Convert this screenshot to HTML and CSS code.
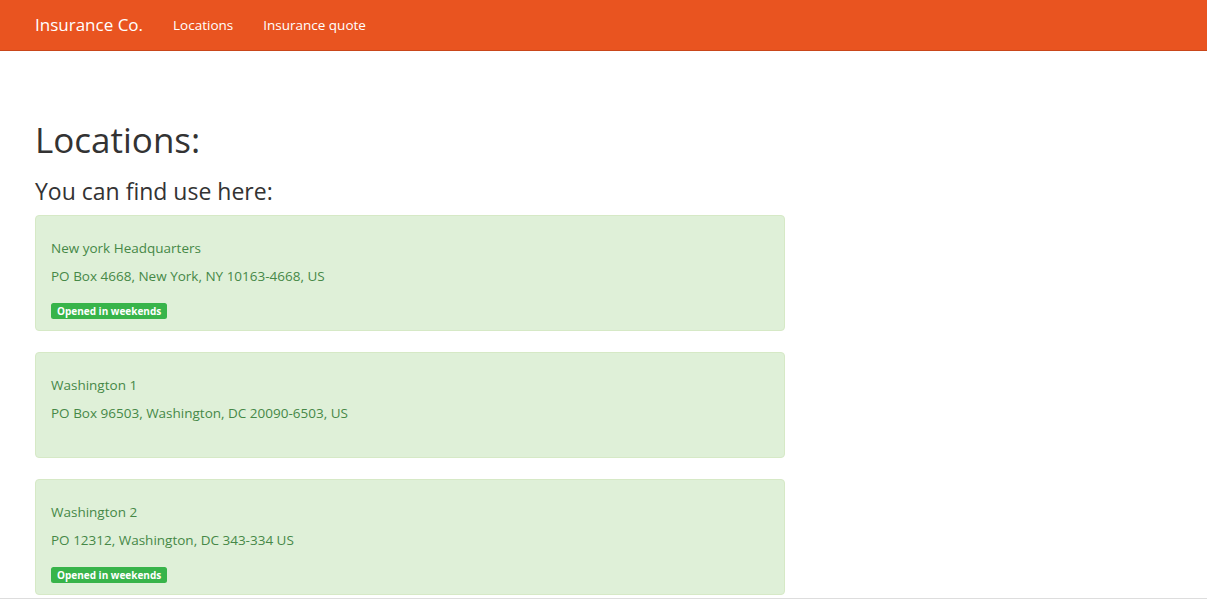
FILE: index.html
```html
<!DOCTYPE html>
<html lang="en">
<head>
<meta charset="utf-8">
<title>Insurance Co.</title>
<link rel="stylesheet" href="styles.css">
</head>
<body>
<nav class="navbar">
  <a class="brand" href="#">Insurance Co.</a>
  <ul class="nav">
    <li><a href="#">Locations</a></li>
    <li><a href="#">Insurance quote</a></li>
  </ul>
</nav>
<main class="container">
  <h1 class="title">Locations:</h1>
  <h2 class="subtitle">You can find use here:</h2>
  <div class="cards">
    <div class="card">
      <p class="line">New york Headquarters</p>
      <p class="line">PO Box 4668, New York, NY 10163-4668, US</p>
      <div class="tags"><span class="label">Opened in weekends</span></div>
    </div>
    <div class="card card-plain">
      <p class="line">Washington 1</p>
      <p class="line">PO Box 96503, Washington, DC 20090-6503, US</p>
    </div>
    <div class="card">
      <p class="line">Washington 2</p>
      <p class="line">PO 12312, Washington, DC 343-334 US</p>
      <div class="tags"><span class="label">Opened in weekends</span></div>
    </div>
  </div>
</main>
<footer class="footer"></footer>
</body>
</html>
```

FILE: styles.css
```css
* { box-sizing: border-box; }
html, body {
  margin: 0;
  padding: 0;
  background: #fff;
  font-family: "Open Sans", "Noto Sans", sans-serif;
  color: #333;
  font-size: 14px;
}
.navbar {
  height: 51px;
  background: #e95420;
  border-bottom: 1px solid #c9461a;
  display: flex;
  align-items: center;
  padding: 0 0 0 35px;
}
.brand {
  color: #fff;
  text-decoration: none;
  font-size: 17px;
  line-height: 50px;
  margin-right: 30px;
}
.nav {
  list-style: none;
  margin: 0;
  padding: 0;
  display: flex;
  gap: 30px;
}
.nav a {
  color: #fff;
  text-decoration: none;
  font-size: 13.5px;
  line-height: 50px;
}
.container {
  padding: 0 35px;
}
.title {
  margin: 69px 0 0;
  font-size: 35px;
  font-weight: 400;
  line-height: 40px;
  color: #333;
}
.subtitle {
  margin: 18px 0 0;
  font-size: 23px;
  font-weight: 400;
  line-height: 26px;
  color: #333;
}
.cards {
  margin-top: 11px;
  width: 750px;
  display: flex;
  flex-direction: column;
  gap: 21px;
}
.card {
  background: #dff0d8;
  border: 1px solid #d6e9c6;
  border-radius: 4px;
  color: #468847;
  padding: 22px 15px 10px;
}
.card-plain {
  padding-bottom: 26px;
}
.line {
  margin: 0 0 8px;
  line-height: 20px;
  font-size: 13.5px;
}
.tags {
  margin-top: 17px;
  margin-bottom: 1px;
  height: 16px;
  display: flex;
}
.label {
  display: inline-block;
  background: #38b44a;
  color: #fff;
  font-weight: 700;
  font-size: 10px;
  line-height: 16px;
  height: 16px;
  padding: 0 6px;
  border-radius: 2.5px;
}
.footer {
  margin-top: 3px;
  border-top: 1px solid #dddddd;
  height: 20px;
}
```
